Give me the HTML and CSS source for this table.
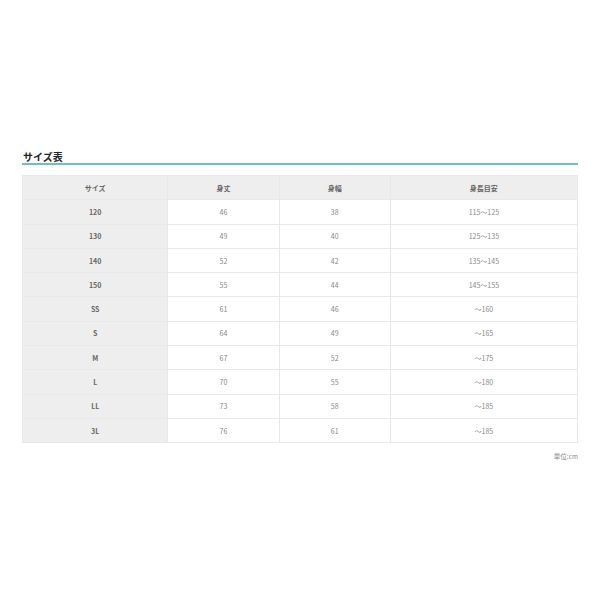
FILE: index.html
```html
<!DOCTYPE html>
<html lang="ja">
<head>
<meta charset="utf-8">
<link rel="stylesheet" href="styles.css">
</head>
<body>
<div class="wrap">
  <h2 class="title">サイズ表</h2>
  <table class="size">
    <thead>
      <tr><th class="c1">サイズ</th><th class="c2">身丈</th><th class="c3">身幅</th><th class="c4">身長目安</th></tr>
    </thead>
    <tbody>
      <tr><th>120</th><td>46</td><td>38</td><td>115～125</td></tr>
      <tr><th>130</th><td>49</td><td>40</td><td>125～135</td></tr>
      <tr><th>140</th><td>52</td><td>42</td><td>135～145</td></tr>
      <tr><th>150</th><td>55</td><td>44</td><td>145～155</td></tr>
      <tr><th>SS</th><td>61</td><td>46</td><td>～160</td></tr>
      <tr><th>S</th><td>64</td><td>49</td><td>～165</td></tr>
      <tr><th>M</th><td>67</td><td>52</td><td>～175</td></tr>
      <tr><th>L</th><td>70</td><td>55</td><td>～180</td></tr>
      <tr><th>LL</th><td>73</td><td>58</td><td>～185</td></tr>
      <tr><th>3L</th><td>76</td><td>61</td><td>～185</td></tr>
    </tbody>
  </table>
  <p class="unit">単位:cm</p>
</div>
</body>
</html>
```
FILE: styles.css
```css
html, body {
  margin: 0;
  padding: 0;
  background: #fff;
}
body {
  font-family: "Noto Sans CJK JP", "Noto Sans", sans-serif;
}
.wrap {
  padding: 151px 22px 0 22px;
}
.title {
  margin: 0;
  padding: 0 0 0 1px;
  font-size: 10px;
  line-height: 12px;
  font-weight: bold;
  color: #222;
  border-bottom: 2px solid #6cc0bd;
}
.size {
  margin-top: 10px;
  width: 100%;
  border-collapse: collapse;
  table-layout: fixed;
  font-size: 7px;
  color: #777;
}
.size th, .size td {
  border: 1px solid #e8e8e8;
  height: 23.3px;
  padding: 0;
  text-align: center;
  vertical-align: middle;
}
.size th {
  background: #eeeeee;
  color: #666;
  font-weight: bold;
}
.size td {
  background: #fff;
  color: #888;
}
.c1 { width: 26.2%; }
.c2 { width: 20%; }
.c3 { width: 20%; }
.c4 { width: 33.8%; }
.unit {
  margin: 8px 0 0;
  text-align: right;
  font-size: 6.5px;
  color: #888;
}
```
